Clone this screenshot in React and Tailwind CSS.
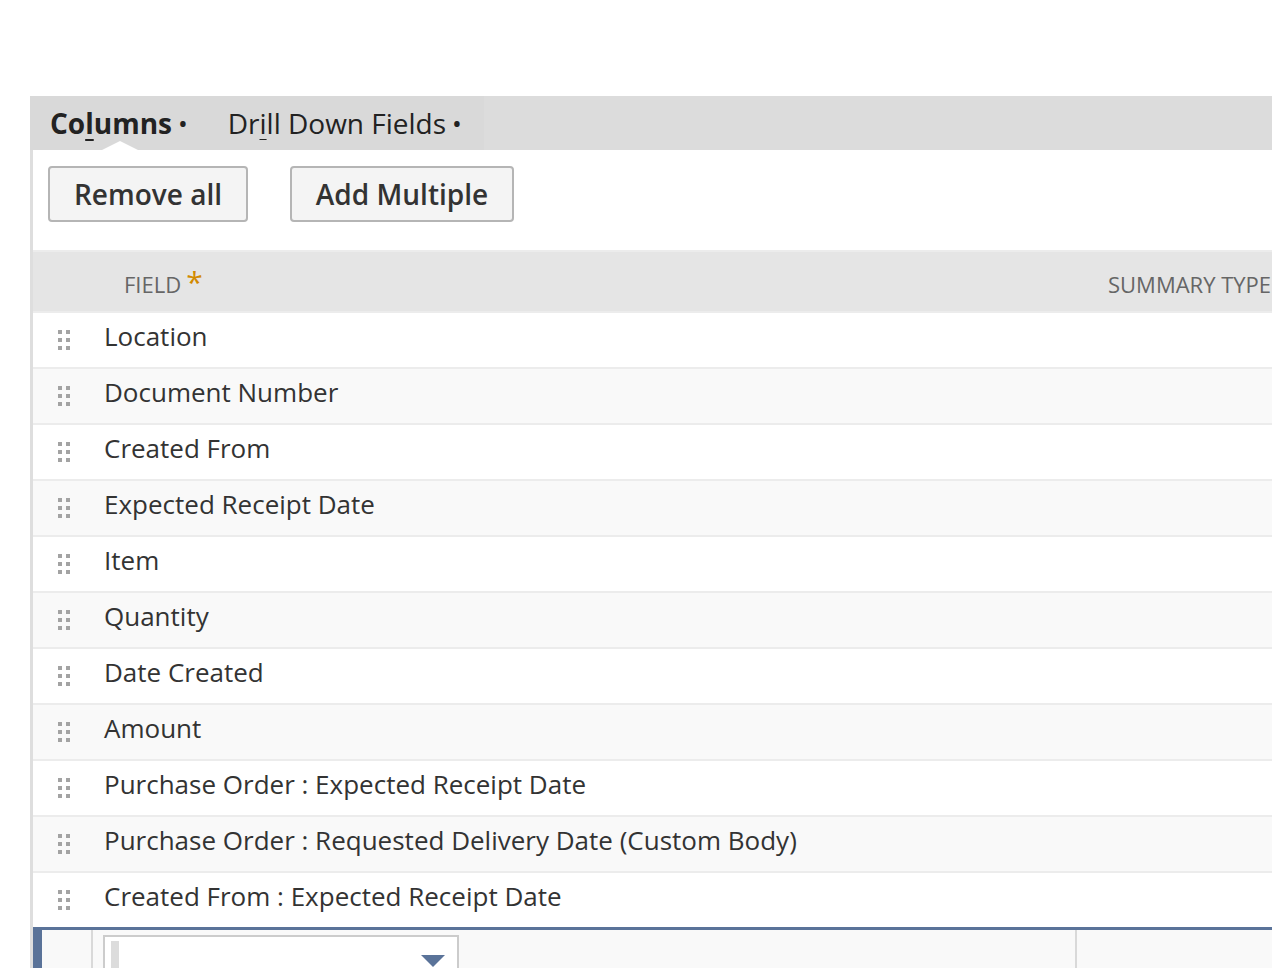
import React from 'react';

const fields = [
  'Location',
  'Document Number',
  'Created From',
  'Expected Receipt Date',
  'Item',
  'Quantity',
  'Date Created',
  'Amount',
  'Purchase Order : Expected Receipt Date',
  'Purchase Order : Requested Delivery Date (Custom Body)',
  'Created From : Expected Receipt Date',
];

const DragHandle = () => (
  <svg width="14" height="22" viewBox="0 0 14 22" className="block">
    {[0, 8, 16].map((y) =>
      [0, 8].map((x) => (
        <rect key={`${x}-${y}`} x={x + 1} y={y + 1} width="4" height="4" fill="#a3a3a3" />
      ))
    )}
  </svg>
);

const App = () => {
  return (
    <div
      className="w-[1272px] h-[968px] overflow-hidden bg-white text-[#333]"
      style={{ fontFamily: '"Open Sans", "Liberation Sans", sans-serif' }}
    >
      <div className="pt-[96px] pl-[30px]">
        <div className="w-[1400px]">
          {/* Tabs */}
          <div className="flex h-[54px] bg-[#dcdcdc]">
            <div className="flex items-center bg-[#d9d9d9] pl-[20px] pr-[22px]">
              <div className="relative flex h-full items-center">
                <span className="text-[28px] font-bold text-[#222]">
                  Co<span className="underline underline-offset-[5px] decoration-[2px]">l</span>umns
                </span>
                <span className="ml-[6px] text-[26px] text-[#222]">•</span>
                <div className="absolute left-[52px] bottom-0 h-0 w-0 border-x-[18px] border-b-[9px] border-x-transparent border-b-white" />
              </div>
              <div className="ml-[40px] flex items-center">
                <span className="text-[28px] text-[#222]">
                  Dr<span className="underline underline-offset-[5px] decoration-[1px]">i</span>ll Down Fields
                </span>
                <span className="ml-[6px] text-[26px] text-[#222]">•</span>
              </div>
            </div>
          </div>

          {/* Panel */}
          <div className="border-l-[3px] border-[#dedede]">
            <div className="flex gap-[42px] pl-[15px] pt-[16px] pb-[28px]">
              <button className="h-[56px] w-[200px] rounded-[4px] border-2 border-[#b5b5b5] bg-[#f4f4f4] text-[28px] font-semibold text-[#333]">
                Remove all
              </button>
              <button className="h-[56px] w-[224px] rounded-[4px] border-2 border-[#b5b5b5] bg-[#f4f4f4] text-[28px] font-semibold text-[#333]">
                Add Multiple
              </button>
            </div>

            {/* Header */}
            <div className="flex h-[61px] border-t-2 border-[#ececec] bg-[#e5e5e5] text-[22px] uppercase text-[#666]">
              <div className="w-[60px]" />
              <div className="flex w-[984px] items-center pl-[31px] pt-[6px]">
                Field
                <span className="ml-[5px] -mt-[6px] text-[30px] leading-none text-[#d28a00]">*</span>
              </div>
              <div className="flex items-center pl-[31px] pt-[6px]">Summary Type</div>
            </div>

            {/* Rows */}
            {fields.map((f, i) => (
              <div
                key={f}
                className={`flex h-[56px] border-t-2 border-[#ececec] ${i % 2 === 0 ? 'bg-white' : 'bg-[#f9f9f9]'}`}
              >
                <div className="flex w-[60px] items-center justify-center pl-[2px]">
                  <DragHandle />
                </div>
                <div className="flex flex-1 items-center pl-[11px] pb-[8px] text-[26px] text-[#333]">{f}</div>
              </div>
            ))}

            {/* New row */}
            <div className="flex h-[60px] border-t-[3px] border-[#5a7399] bg-[#f9f9f9]">
              <div className="w-[9px] bg-[#5a7399]" />
              <div className="w-[51px] border-r-2 border-[#d9d9d9]" />
              <div className="w-[984px] border-r-2 border-[#d9d9d9] pl-[10px] pt-[5px]">
                <div className="flex h-[60px] w-[356px] items-start justify-between border-2 border-[#cccccc] bg-white pl-[6px] pt-[4px] pr-[12px]">
                  <div className="h-[40px] w-[8px] bg-[#dcdcdc]" />
                  <svg width="24" height="14" viewBox="0 0 24 14" className="mt-[14px]">
                    <path d="M0 0 H24 L12 12 Z" fill="#5a7399" />
                  </svg>
                </div>
              </div>
              <div className="flex-1" />
            </div>
          </div>
        </div>
      </div>
    </div>
  );
};

export default App;
